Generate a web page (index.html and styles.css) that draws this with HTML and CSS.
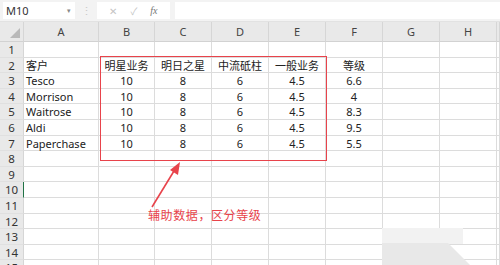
FILE: index.html
```html
<!DOCTYPE html>
<html lang="zh">
<head>
  <meta charset="UTF-8" />
  <title>Excel - 客户等级</title>
  <link rel="stylesheet" href="styles.css">
</head>
<body>

<!-- BARRA DE FORMULAS -->
<div class="barra">
  <div class="nombre">M10<span class="flecha">▾</span></div>
  <div class="puntos">⋮</div>
  <div class="botones">
    <span class="icono">✕</span>
    <span class="icono">✓</span>
    <span class="icono fx">fx</span>
  </div>
  <div class="formula"></div>
</div>

<!-- HOJA -->
<div class="hoja">
  <div class="rejilla">
    <div class="esquina"><span class="triangulo"></span></div>
    <div class="col">A</div><div class="col">B</div><div class="col">C</div><div class="col">D</div>
    <div class="col">E</div><div class="col">F</div><div class="col">G</div><div class="col">H</div><div class="col"></div>

    <div class="fila">1</div><div class="c"></div><div class="c"></div><div class="c"></div><div class="c"></div><div class="c"></div><div class="c"></div><div class="c"></div><div class="c"></div><div class="c"></div>

    <div class="fila">2</div><div class="c izq">客户</div><div class="c">明星业务</div><div class="c">明日之星</div><div class="c">中流砥柱</div><div class="c">一般业务</div><div class="c">等级</div><div class="c"></div><div class="c"></div><div class="c"></div>

    <div class="fila">3</div><div class="c izq">Tesco</div><div class="c">10</div><div class="c">8</div><div class="c">6</div><div class="c">4.5</div><div class="c">6.6</div><div class="c"></div><div class="c"></div><div class="c"></div>

    <div class="fila">4</div><div class="c izq">Morrison</div><div class="c">10</div><div class="c">8</div><div class="c">6</div><div class="c">4.5</div><div class="c">4</div><div class="c"></div><div class="c"></div><div class="c"></div>

    <div class="fila">5</div><div class="c izq">Waitrose</div><div class="c">10</div><div class="c">8</div><div class="c">6</div><div class="c">4.5</div><div class="c">8.3</div><div class="c"></div><div class="c"></div><div class="c"></div>

    <div class="fila">6</div><div class="c izq">Aldi</div><div class="c">10</div><div class="c">8</div><div class="c">6</div><div class="c">4.5</div><div class="c">9.5</div><div class="c"></div><div class="c"></div><div class="c"></div>

    <div class="fila">7</div><div class="c izq">Paperchase</div><div class="c">10</div><div class="c">8</div><div class="c">6</div><div class="c">4.5</div><div class="c">5.5</div><div class="c"></div><div class="c"></div><div class="c"></div>

    <div class="fila">8</div><div class="c"></div><div class="c"></div><div class="c"></div><div class="c"></div><div class="c"></div><div class="c"></div><div class="c"></div><div class="c"></div><div class="c"></div>
    <div class="fila">9</div><div class="c"></div><div class="c"></div><div class="c"></div><div class="c"></div><div class="c"></div><div class="c"></div><div class="c"></div><div class="c"></div><div class="c"></div>
    <div class="fila activa">10</div><div class="c"></div><div class="c"></div><div class="c"></div><div class="c"></div><div class="c"></div><div class="c"></div><div class="c"></div><div class="c"></div><div class="c"></div>
    <div class="fila">11</div><div class="c"></div><div class="c"></div><div class="c"></div><div class="c"></div><div class="c"></div><div class="c"></div><div class="c"></div><div class="c"></div><div class="c"></div>
    <div class="fila">12</div><div class="c"></div><div class="c"></div><div class="c"></div><div class="c"></div><div class="c"></div><div class="c"></div><div class="c"></div><div class="c"></div><div class="c"></div>
    <div class="fila">13</div><div class="c"></div><div class="c"></div><div class="c"></div><div class="c"></div><div class="c"></div><div class="c"></div><div class="c"></div><div class="c"></div><div class="c"></div>
    <div class="fila">14</div><div class="c"></div><div class="c"></div><div class="c"></div><div class="c"></div><div class="c"></div><div class="c"></div><div class="c"></div><div class="c"></div><div class="c"></div>
    <div class="fila">15</div><div class="c"></div><div class="c"></div><div class="c"></div><div class="c"></div><div class="c"></div><div class="c"></div><div class="c"></div><div class="c"></div><div class="c"></div>
  </div>

  <!-- anotación en rojo -->
  <div class="marco"></div>
  <svg class="flechaRoja" width="40" height="50" viewBox="0 0 40 50">
    <line x1="4" y1="46" x2="26" y2="10" stroke="#e8434b" stroke-width="1.6" />
    <polygon points="32,1 22,9 30,14" fill="#e8434b" />
  </svg>
  <div class="nota">辅助数据，区分等级</div>

  <!-- sombra gris abajo -->
  <div class="mancha1"></div>
  <div class="mancha2"></div>
</div>

</body>
</html>
```

FILE: styles.css
```css
body {
  margin: 0;
  background: #ffffff;
  font-family: 'Noto Sans', 'Noto Sans CJK SC', sans-serif;
  color: #222;
  width: 500px;
  height: 265px;
  overflow: hidden;
}

.barra {
  display: flex;
  align-items: center;
  height: 21px;
  background: #f3f3f3;
  border-bottom: 1px solid #e2e2e2;
}

.nombre {
  width: 72px;
  height: 17px;
  margin-left: 3px;
  background: #fff;
  font-size: 11px;
  line-height: 17px;
  padding-left: 3px;
  box-sizing: border-box;
  color: #333;
  display: flex;
  justify-content: space-between;
}

.flecha {
  font-size: 7px;
  color: #888;
  padding-right: 4px;
}

.puntos {
  width: 22px;
  text-align: center;
  color: #c8c8c8;
  font-size: 11px;
}

.botones {
  width: 73px;
  height: 17px;
  background: #fff;
  display: flex;
  align-items: center;
  justify-content: space-around;
  padding: 0 6px;
  box-sizing: border-box;
}

.icono {
  font-size: 10px;
  color: #c4c4c4;
}

.fx {
  font-family: 'Liberation Serif', serif;
  font-style: italic;
  color: #777;
}

.formula {
  flex: 1;
  height: 17px;
  margin-left: 5px;
  background: #fff;
}

.hoja {
  position: relative;
}

.rejilla {
  display: grid;
  grid-template-columns: 24px 75px 56px 57px 57px 57px 57px 57px 57px 1fr;
  grid-template-rows: 20px;
  grid-auto-rows: 15.6px;
  font-size: 11px;
}

.esquina, .col, .fila {
  background: #e9e9e9;
  color: #444;
  box-sizing: border-box;
  border-right: 1px solid #d6d6d6;
  border-bottom: 1px solid #d2d2d2;
}

.esquina {
  position: relative;
}

.triangulo {
  position: absolute;
  right: 3px;
  bottom: 3px;
  width: 0;
  height: 0;
  border-left: 10px solid transparent;
  border-bottom: 10px solid #b9b9b9;
}

.col {
  text-align: center;
  line-height: 20px;
}

.fila {
  text-align: center;
  font-size: 11.5px;
  line-height: 15px;
  color: #333;
  border-bottom-color: #e0e0e0;
}

.fila.activa {
  border-right: 1px solid #217346;
}

.c {
  box-sizing: border-box;
  border-right: 1px solid #dcdcdc;
  border-bottom: 1px solid #dcdcdc;
  text-align: center;
  line-height: 15px;
  white-space: nowrap;
  overflow: visible;
}

.izq {
  text-align: left;
  padding-left: 2px;
}

.marco {
  position: absolute;
  left: 100px;
  top: 34px;
  width: 227px;
  height: 105px;
  box-sizing: border-box;
  border: 1.5px solid #e8434b;
}

.flechaRoja {
  position: absolute;
  left: 148px;
  top: 139px;
}

.nota {
  position: absolute;
  left: 148px;
  top: 184px;
  font-family: 'Noto Sans CJK SC', sans-serif;
  font-size: 12px;
  letter-spacing: 0.6px;
  color: #e8434b;
}

.mancha1 {
  position: absolute;
  left: 382px;
  top: 206px;
  width: 81px;
  height: 16px;
  background: #f2f2f2;
}

.mancha2 {
  position: absolute;
  left: 382px;
  top: 221px;
  width: 88px;
  height: 22px;
  background: #e8e8e8;
  clip-path: polygon(0 0, 75% 0, 100% 100%, 0 100%);
}
```
